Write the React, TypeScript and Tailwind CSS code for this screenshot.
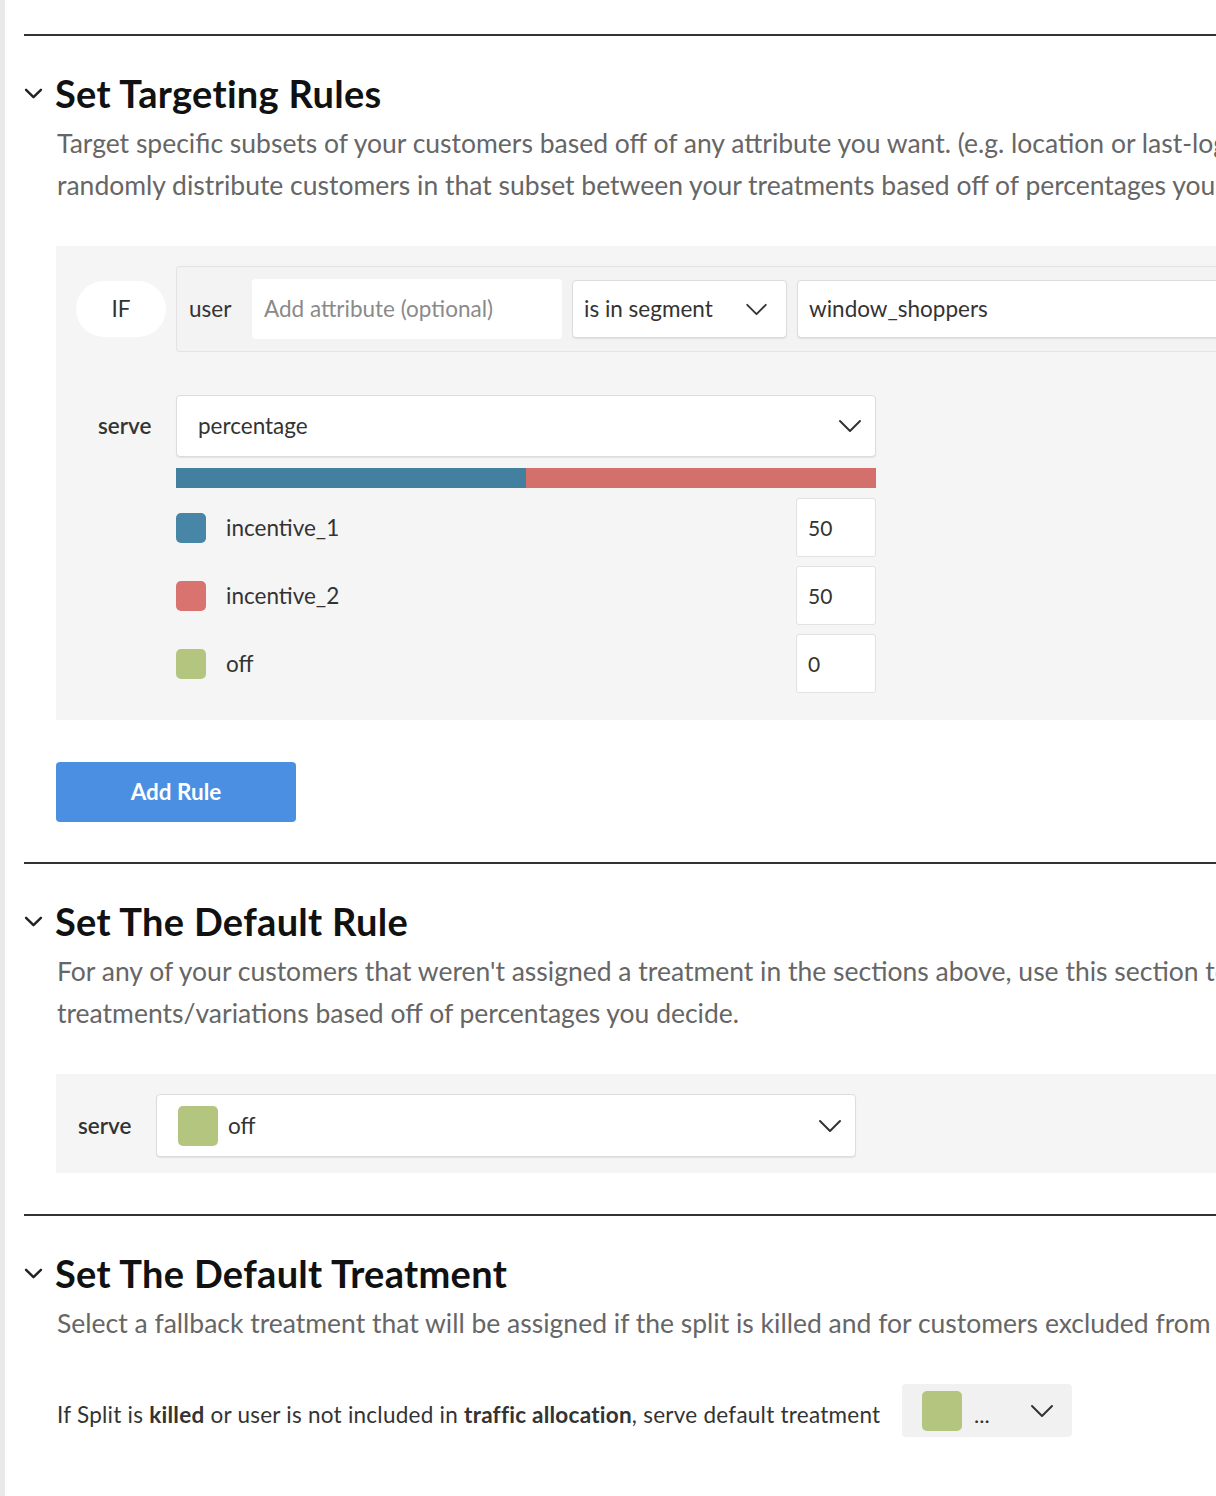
const font = { fontFamily: "Lato, 'Noto Sans', sans-serif" };

const Chevron = ({ className }: { className?: string }) => (
  <svg viewBox="0 0 24 14" className={className} fill="none" stroke="currentColor" strokeWidth="2" strokeLinecap="round" strokeLinejoin="round">
    <polyline points="2,2 12,12 22,2" />
  </svg>
);

const SectionHeader = ({ title, lines }: { title: string; lines: string[] }) => (
  <>
    <div className="flex items-center h-[44px] mt-[35px]">
      <svg viewBox="0 0 20 14" className="w-[19px] h-[13px] text-[#222] mr-[12px]" fill="none" stroke="currentColor" strokeWidth="2.6" strokeLinecap="round" strokeLinejoin="round">
        <polyline points="2,3 10,11 18,3" />
      </svg>
      <h2 className="text-[38px] tracking-[0.3px] font-bold text-[#111] leading-[44px] whitespace-nowrap">{title}</h2>
    </div>
    <div className="pl-[33px] mt-[7px] text-[26.5px] leading-[42px] text-[#666] whitespace-nowrap">
      {lines.map((l) => (
        <div key={l}>{l}</div>
      ))}
    </div>
  </>
);

const treatments = [
  { name: "incentive_1", color: "bg-[#4786a6]", value: "50" },
  { name: "incentive_2", color: "bg-[#d97370]", value: "50" },
  { name: "off", color: "bg-[#b4c580]", value: "0" },
];

export default function App() {
  return (
    <div style={font} className="w-[1216px] h-[1496px] overflow-hidden bg-white border-l-[5px] border-[#e9e9e9]">
      <div className="pl-[19px] pt-[34px] w-[1500px]">
        {/* targeting rules */}
        <hr className="border-0 h-[2px] bg-[#333]" />
        <SectionHeader
          title="Set Targeting Rules"
          lines={[
            "Target specific subsets of your customers based off of any attribute you want. (e.g. location or last-login date), then",
            "randomly distribute customers in that subset between your treatments based off of percentages you decide.",
          ]}
        />

        <div className="ml-[32px] mt-[40px] bg-[#f5f5f5] pl-[20px] pt-[20px] pb-[27px]">
          <div className="flex items-center gap-[10px]">
            <div className="w-[90px] h-[56px] rounded-full bg-white flex items-center justify-center text-[22.5px] text-[#333]">IF</div>
            <div className="flex-1 flex items-center h-[86px] border border-[#e3e3e3] bg-[#f3f3f3] rounded-[3px] pl-[12px] gap-[10px]">
              <span className="text-[22.5px] text-[#333] w-[53px]">user</span>
              <div className="w-[310px] h-[60px] bg-white rounded-[4px] flex items-center pl-[12px] text-[22.5px] text-[#8a8a8a]">
                Add attribute (optional)
              </div>
              <div className="w-[215px] h-[58px] bg-white rounded-[4px] border border-[#dcdcdc] shadow-[0_1px_1px_rgba(0,0,0,0.08)] flex items-center justify-between pl-[11px] pr-[18px] text-[22.5px] text-[#333]">
                <span>is in segment</span>
                <Chevron className="w-[23px] h-[13px] text-[#333]" />
              </div>
              <div className="flex-1 h-[58px] bg-white rounded-[4px] border border-[#dcdcdc] shadow-[0_1px_1px_rgba(0,0,0,0.08)] flex items-center pl-[11px] text-[22.5px] text-[#333]">
                window_shoppers
              </div>
            </div>
          </div>

          <div className="flex mt-[43px]">
            <div className="w-[100px] h-[62px] flex items-center pl-[22px] text-[22.5px] font-semibold text-[#333]">serve</div>
            <div className="w-[700px]">
              <div className="h-[62px] bg-white rounded-[4px] border border-[#dcdcdc] shadow-[0_1px_1px_rgba(0,0,0,0.08)] flex items-center justify-between pl-[21px] pr-[13px] text-[22.5px] text-[#333]">
                <span>percentage</span>
                <Chevron className="w-[24px] h-[14px] text-[#333]" />
              </div>
              <div className="flex h-[20px] mt-[11px]">
                <div className="w-1/2 bg-[#43809f]" />
                <div className="w-1/2 bg-[#d4706c]" />
              </div>
              <div className="flex flex-col gap-[9px] mt-[10px]">
                {treatments.map((t) => (
                  <div key={t.name} className="flex items-center h-[59px]">
                    <div className={`w-[30px] h-[30px] rounded-[5px] ${t.color}`} />
                    <span className="ml-[20px] flex-1 text-[22.5px] text-[#333]">{t.name}</span>
                    <div className="w-[80px] h-[59px] bg-white rounded-[3px] border border-[#e2e2e2] flex items-center pl-[11px] text-[21px] text-[#333]">
                      {t.value}
                    </div>
                  </div>
                ))}
              </div>
            </div>
          </div>
        </div>

        <button className="ml-[32px] mt-[42px] w-[240px] h-[60px] rounded-[4px] bg-[#4a8fe2] text-white text-[22.5px] font-bold">
          Add Rule
        </button>

        {/* default rule */}
        <hr className="mt-[40px] border-0 h-[2px] bg-[#333]" />
        <SectionHeader
          title="Set The Default Rule"
          lines={[
            "For any of your customers that weren't assigned a treatment in the sections above, use this section to serve them a single treatment or distribute them between your",
            "treatments/variations based off of percentages you decide.",
          ]}
        />
        <div className="ml-[32px] mt-[40px] bg-[#f5f5f5] pl-[22px] pt-[20px] pb-[16px] flex items-center">
          <span className="w-[78px] text-[22.5px] font-semibold text-[#333]">serve</span>
          <div className="w-[700px] h-[63px] bg-white rounded-[4px] border border-[#dcdcdc] shadow-[0_1px_1px_rgba(0,0,0,0.08)] flex items-center pl-[21px] pr-[13px] text-[22.5px] text-[#333]">
            <div className="w-[40px] h-[40px] rounded-[5px] bg-[#b4c580]" />
            <span className="ml-[10px] flex-1">off</span>
            <Chevron className="w-[24px] h-[14px] text-[#333]" />
          </div>
        </div>

        {/* default treatment */}
        <hr className="mt-[41px] border-0 h-[2px] bg-[#333]" />
        <SectionHeader
          title="Set The Default Treatment"
          lines={[
            "Select a fallback treatment that will be assigned if the split is killed and for customers excluded from the traffic allocation.",
          ]}
        />
        <div className="ml-[33px] mt-[40px] flex items-center">
          <p className="text-[22.5px] text-[#333] tracking-[0.25px] w-[845px] whitespace-nowrap pt-[8px]">
            If Split is <b>killed</b> or user is not included in <b>traffic allocation</b>, serve default treatment
          </p>
          <div className="w-[170px] h-[53px] bg-[#f1f1f1] rounded-[4px] flex items-center pl-[20px] pr-[18px]">
            <div className="w-[40px] h-[40px] rounded-[5px] bg-[#b4c580]" />
            <span className="ml-[12px] flex-1 text-[22px] text-[#333] pt-[8px]">...</span>
            <Chevron className="w-[24px] h-[14px] text-[#333]" />
          </div>
        </div>
      </div>
    </div>
  );
}
